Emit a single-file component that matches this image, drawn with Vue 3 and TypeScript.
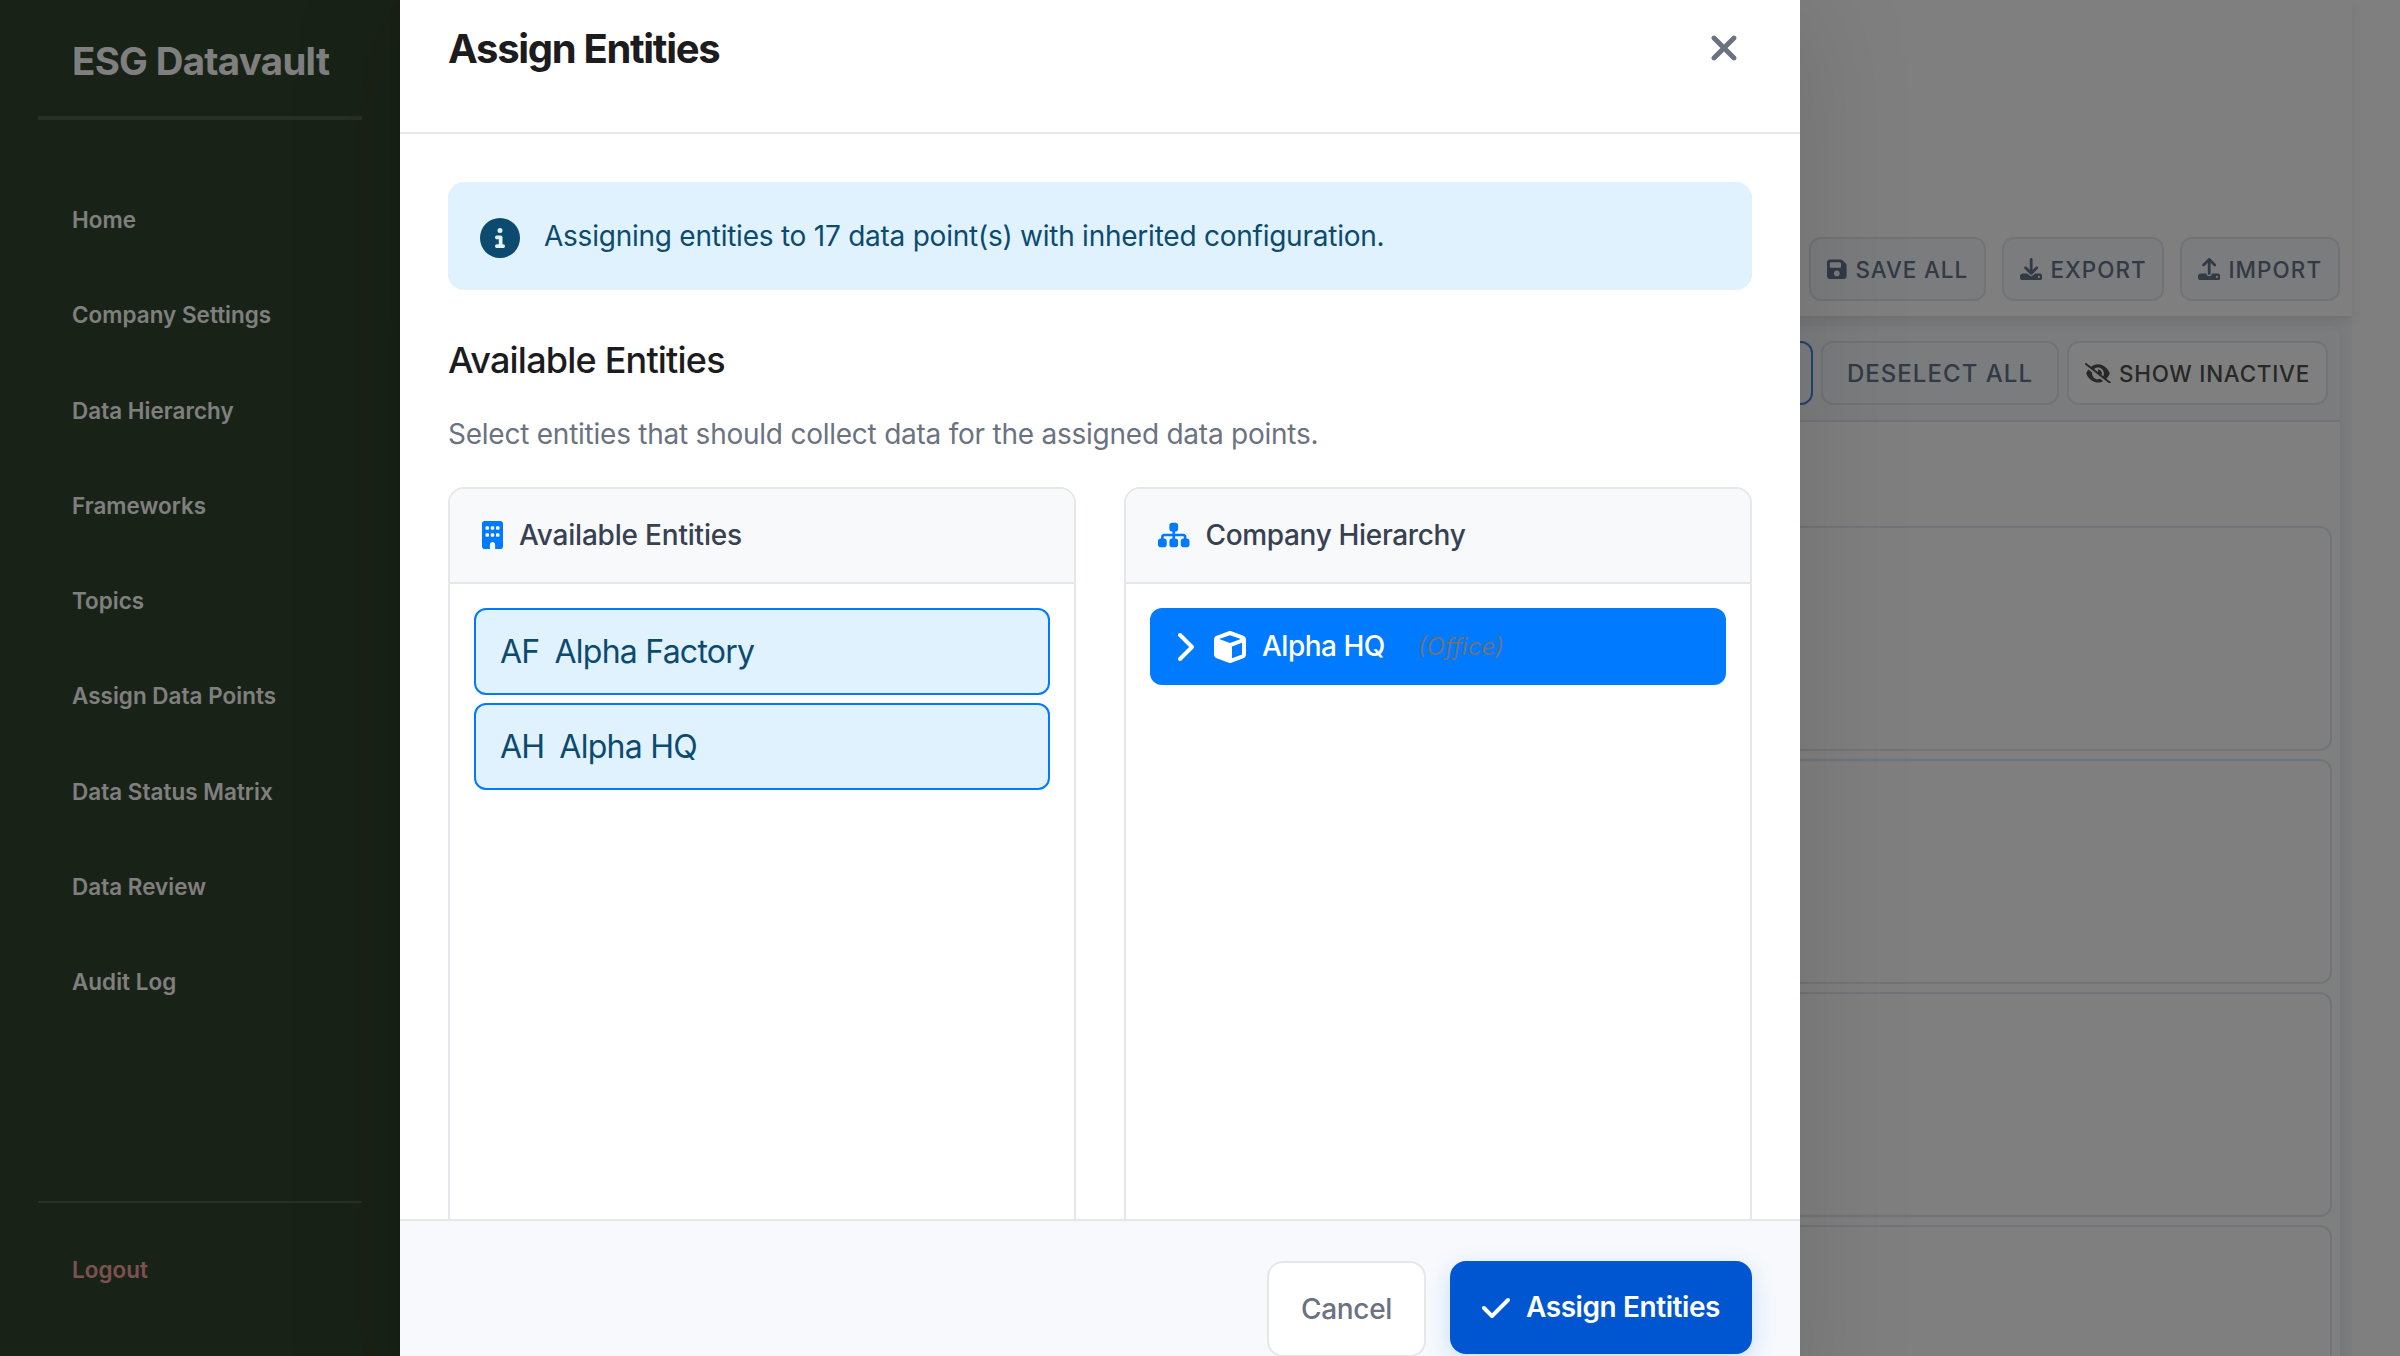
<script setup lang="ts">
interface Glyph { w: number; d: string }

const icons: Record<string, Glyph> = {
  info: { w: 512, d: 'M256 512A256 256 0 1 0 256 0a256 256 0 1 0 0 512zM216 336h24V272H216c-13.3 0-24-10.7-24-24s10.7-24 24-24h48c13.3 0 24 10.7 24 24v88h8c13.3 0 24 10.7 24 24s-10.7 24-24 24H216c-13.3 0-24-10.7-24-24s10.7-24 24-24zm40-208a32 32 0 1 1 0 64 32 32 0 1 1 0-64z' },
  building: { w: 384, d: 'M48 0C21.5 0 0 21.5 0 48V464c0 26.5 21.5 48 48 48h96V432c0-26.5 21.5-48 48-48s48 21.5 48 48v80h96c26.5 0 48-21.5 48-48V48c0-26.5-21.5-48-48-48H48zM64 240c0-8.8 7.2-16 16-16h32c8.8 0 16 7.2 16 16v32c0 8.8-7.2 16-16 16H80c-8.8 0-16-7.2-16-16V240zm112-16h32c8.8 0 16 7.2 16 16v32c0 8.8-7.2 16-16 16H176c-8.8 0-16-7.2-16-16V240c0-8.8 7.2-16 16-16zm80 16c0-8.8 7.2-16 16-16h32c8.8 0 16 7.2 16 16v32c0 8.8-7.2 16-16 16H272c-8.8 0-16-7.2-16-16V240zM80 96h32c8.8 0 16 7.2 16 16v32c0 8.8-7.2 16-16 16H80c-8.8 0-16-7.2-16-16V112c0-8.8 7.2-16 16-16zm80 16c0-8.8 7.2-16 16-16h32c8.8 0 16 7.2 16 16v32c0 8.8-7.2 16-16 16H176c-8.8 0-16-7.2-16-16V112zM272 96h32c8.8 0 16 7.2 16 16v32c0 8.8-7.2 16-16 16H272c-8.8 0-16-7.2-16-16V112c0-8.8 7.2-16 16-16z' },
  sitemap: { w: 576, d: 'M208 80c0-26.5 21.5-48 48-48h64c26.5 0 48 21.5 48 48v64c0 26.5-21.5 48-48 48h-8v40H464c30.9 0 56 25.1 56 56v32h8c26.5 0 48 21.5 48 48v64c0 26.5-21.5 48-48 48H464c-26.5 0-48-21.5-48-48V368c0-26.5 21.5-48 48-48h8V288c0-4.4-3.6-8-8-8H312v40h8c26.5 0 48 21.5 48 48v64c0 26.5-21.5 48-48 48H256c-26.5 0-48-21.5-48-48V368c0-26.5 21.5-48 48-48h8V280H112c-4.4 0-8 3.6-8 8v32h8c26.5 0 48 21.5 48 48v64c0 26.5-21.5 48-48 48H48c-26.5 0-48-21.5-48-48V368c0-26.5 21.5-48 48-48h8V288c0-30.9 25.1-56 56-56H264V192h-8c-26.5 0-48-21.5-48-48V80z' },
  xmark: { w: 384, d: 'M342.6 150.6c12.5-12.5 12.5-32.8 0-45.3s-32.8-12.5-45.3 0L192 210.7 86.6 105.4c-12.5-12.5-32.8-12.5-45.3 0s-12.5 32.8 0 45.3L146.7 256 41.4 361.4c-12.5 12.5-12.5 32.8 0 45.3s32.8 12.5 45.3 0L192 301.3 297.4 406.6c12.5 12.5 32.8 12.5 45.3 0s12.5-32.8 0-45.3L237.3 256 342.6 150.6z' },
  check: { w: 448, d: 'M438.6 105.4c12.5 12.5 12.5 32.8 0 45.3l-256 256c-12.5 12.5-32.8 12.5-45.3 0l-128-128c-12.5-12.5-12.5-32.8 0-45.3s32.8-12.5 45.3 0L160 338.7 393.4 105.4c12.5-12.5 32.8-12.5 45.3 0z' },
  chevron: { w: 320, d: 'M310.6 233.4c12.5 12.5 12.5 32.8 0 45.3l-192 192c-12.5 12.5-32.8 12.5-45.3 0s-12.5-32.8 0-45.3L242.7 256 73.4 86.6c-12.5-12.5-12.5-32.8 0-45.3s32.8-12.5 45.3 0l192 192z' },
  cube: { w: 512, d: 'M234.5 5.7c13.9-5 29.1-5 43.1 0l192 68.6C495 83.4 512 107.5 512 134.6V377.4c0 27-17 51.2-42.5 60.3l-192 68.6c-13.9 5-29.1 5-43.1 0l-192-68.6C17 428.6 0 404.5 0 377.4V134.6c0-27 17-51.2 42.5-60.3l192-68.6zM256 66L82.3 128 256 190l173.7-62L256 66zm32 368.6l160-57.1v-188L288 246.6v188z' },
  save: { w: 448, d: 'M64 32C28.7 32 0 60.7 0 96V416c0 35.3 28.7 64 64 64H384c35.3 0 64-28.7 64-64V173.3c0-17-6.7-33.3-18.7-45.3L352 50.7C340 38.7 323.7 32 306.7 32H64zm0 96c0-17.7 14.3-32 32-32H288c17.7 0 32 14.3 32 32v64c0 17.7-14.3 32-32 32H96c-17.7 0-32-14.3-32-32V128zM224 288a64 64 0 1 1 0 128 64 64 0 1 1 0-128z' },
  download: { w: 512, d: 'M288 32c0-17.7-14.3-32-32-32s-32 14.3-32 32V274.7l-73.4-73.4c-12.5-12.5-32.8-12.5-45.3 0s-12.5 32.8 0 45.3l128 128c12.5 12.5 32.8 12.5 45.3 0l128-128c12.5-12.5 12.5-32.8 0-45.3s-32.8-12.5-45.3 0L288 274.7V32zM64 352c-35.3 0-64 28.7-64 64v32c0 35.3 28.7 64 64 64H448c35.3 0 64-28.7 64-64V416c0-35.3-28.7-64-64-64H346.5l-45.3 45.3c-25 25-65.5 25-90.5 0L165.5 352H64zm368 56a24 24 0 1 1 0 48 24 24 0 1 1 0-48z' },
  upload: { w: 512, d: 'M288 109.3V352c0 17.7-14.3 32-32 32s-32-14.3-32-32V109.3l-73.4 73.4c-12.5 12.5-32.8 12.5-45.3 0s-12.5-32.8 0-45.3l128-128c12.5-12.5 32.8-12.5 45.3 0l128 128c12.5 12.5 12.5 32.8 0 45.3s-32.8 12.5-45.3 0L288 109.3zM64 352H192c0 35.3 28.7 64 64 64s64-28.7 64-64H448c35.3 0 64 28.7 64 64v32c0 35.3-28.7 64-64 64H64c-35.3 0-64-28.7-64-64V416c0-35.3 28.7-64 64-64zM432 456a24 24 0 1 0 0-48 24 24 0 1 0 0 48z' },
  eyeSlash: { w: 640, d: 'M38.8 5.1C28.4-3.1 13.3-1.2 5.1 9.2S-1.2 34.7 9.2 42.9l592 464c10.4 8.2 25.5 6.3 33.7-4.1s6.3-25.5-4.1-33.7L525.6 386.7c39.6-40.6 66.4-86.1 79.9-118.4c3.3-7.9 3.3-16.7 0-24.6c-14.9-35.7-46.2-87.7-93-131.1C465.5 68.8 400.8 32 320 32c-68.2 0-125 26.3-169.3 60.8L38.8 5.1zM223.1 149.5C248.6 126.2 282.7 112 320 112c79.5 0 144 64.5 144 144c0 24.9-6.3 48.3-17.4 68.7L408 294.5c8.4-19.3 10.6-41.4 4.8-63.3c-11.1-41.5-47.8-69.4-88.6-71.1c-5.8-.2-9.2 6.1-7.4 11.7c2.1 6.4 3.3 13.2 3.3 20.3c0 10.2-2.4 19.8-6.6 28.3l-90.3-70.8zM373 389.9c-16.4 6.5-34.3 10.1-53 10.1c-79.5 0-144-64.5-144-144c0-6.9 .5-13.6 1.4-20.2L83.1 161.5C60.3 191.2 44 220.8 34.5 243.7c-3.3 7.9-3.3 16.7 0 24.6c14.9 35.7 46.2 87.7 93 131.1C174.5 443.2 239.2 480 320 480c47.8 0 89.9-12.9 126.2-32.5L373 389.9z' },
}

const navItems: string[] = [
  'Home', 'Company Settings', 'Data Hierarchy', 'Frameworks', 'Topics',
  'Assign Data Points', 'Data Status Matrix', 'Data Review', 'Audit Log',
]

const actions = [
  { key: 'save', label: 'SAVE ALL' },
  { key: 'download', label: 'EXPORT' },
  { key: 'upload', label: 'IMPORT' },
]

const entities = [
  { code: 'AF', name: 'Alpha Factory' },
  { code: 'AH', name: 'Alpha HQ' },
]

const rows = [1, 2, 3, 4]
const box = (key: string): string => `0 0 ${icons[key].w} 512`
</script>

<template>
  <div class="app">
    <aside class="sidebar">
      <div class="brand">ESG Datavault</div>
      <nav class="nav">
        <a v-for="item in navItems" :key="item" class="nav-item">{{ item }}</a>
      </nav>
      <div class="logout"><a class="nav-item danger">Logout</a></div>
    </aside>

    <main class="main">
      <header class="topbar">
        <button v-for="a in actions" :key="a.key" class="tool" :class="a.key">
          <svg class="ic" :class="a.key" :viewBox="box(a.key)"><path :d="icons[a.key].d" /></svg>
          <span>{{ a.label }}</span>
        </button>
      </header>
      <div class="content">
        <section class="card">
          <div class="card-bar">
            <button class="tool primary" aria-label="Select all"></button>
            <button class="tool deselect">DESELECT ALL</button>
            <button class="tool inactive">
              <svg class="ic eye" :viewBox="box('eyeSlash')"><path :d="icons.eyeSlash.d" /></svg>
              <span>SHOW INACTIVE</span>
            </button>
          </div>
          <div class="rows">
            <div v-for="r in rows" :key="r" class="row"></div>
          </div>
        </section>
      </div>
    </main>

    <div class="overlay">
      <div class="modal">
        <header class="modal-head">
          <h3 class="modal-title">Assign Entities</h3>
          <svg class="ic close" :viewBox="box('xmark')"><path :d="icons.xmark.d" /></svg>
        </header>
        <div class="modal-body">
          <div class="banner">
            <svg class="ic info" :viewBox="box('info')"><path :d="icons.info.d" /></svg>
            <span class="banner-text">Assigning entities to 17 data point(s) with inherited configuration.</span>
          </div>
          <h4 class="section-title">Available Entities</h4>
          <p class="section-sub">Select entities that should collect data for the assigned data points.</p>
          <div class="panels">
            <div class="panel">
              <div class="panel-head">
                <svg class="ic building" :viewBox="box('building')"><path :d="icons.building.d" /></svg>
                <span class="pt-left">Available Entities</span>
              </div>
              <div class="panel-body">
                <div v-for="e in entities" :key="e.code" class="entity">
                  <span>{{ e.code }}</span><span class="entity-name">{{ e.name }}</span>
                </div>
              </div>
            </div>
            <div class="panel">
              <div class="panel-head">
                <svg class="ic sitemap" :viewBox="box('sitemap')"><path :d="icons.sitemap.d" /></svg>
                <span class="pt-right">Company Hierarchy</span>
              </div>
              <div class="panel-body">
                <div class="node">
                  <svg class="ic chevron" :viewBox="box('chevron')"><path :d="icons.chevron.d" /></svg>
                  <svg class="ic cube" :viewBox="box('cube')"><path :d="icons.cube.d" /></svg>
                  <span class="node-name">Alpha HQ</span>
                  <span class="node-type">(Office)</span>
                </div>
              </div>
            </div>
          </div>
        </div>
        <footer class="modal-foot">
          <button class="btn cancel">Cancel</button>
          <button class="btn assign">
            <svg class="ic check" :viewBox="box('check')"><path :d="icons.check.d" /></svg>
            <span class="assign-label">Assign Entities</span>
          </button>
        </footer>
      </div>
    </div>
  </div>
</template>

<style>
body { margin: 0; overflow: hidden; }
</style>

<style scoped>
.app, .app * { box-sizing: border-box; }
.app {
  position: relative;
  display: flex;
  width: 2400px;
  height: 1356px;
  overflow: hidden;
  background: #fff;
  font-family: Inter, "Liberation Sans", sans-serif;
}
button { font-family: inherit; margin: 0; padding: 0; }
.ic { display: block; flex: none; fill: currentColor; }

.sidebar {
  display: flex;
  flex-direction: column;
  flex: none;
  width: 400px;
  height: 1356px;
  padding: 0 38px;
  background: #32442e;
  color: #fff;
}
.brand {
  height: 120px;
  padding: 38px 0 0 34px;
  border-bottom: 4px solid rgba(255, 255, 255, 0.15);
  font-size: 38.4px;
  font-weight: 700;
  line-height: 46px;
  letter-spacing: -0.68px;
  white-space: nowrap;
}
.nav { display: flex; flex-direction: column; padding-top: 52px; }
.nav-item {
  display: flex;
  align-items: center;
  height: 95.25px;
  padding-left: 34px;
  font-size: 22.4px;
  font-weight: 600;
  letter-spacing: 0.06px;
  white-space: nowrap;
}
.logout {
  height: 155px;
  margin-top: auto;
  padding-top: 19px;
  border-top: 2px solid rgba(255, 255, 255, 0.15);
}
.danger { color: #f5a5a5; }

.main { display: flex; flex-direction: column; flex: 1; padding-right: 48px; }
.topbar {
  display: flex;
  flex: none;
  justify-content: flex-end;
  align-items: flex-end;
  gap: 16px;
  height: 318px;
  padding: 0 12px 15px 0;
  border-bottom: 2px solid #e2e6ee;
  box-shadow: 0 4px 12px rgba(0, 0, 0, 0.08);
  position: relative;
}
.tool {
  display: flex;
  align-items: center;
  height: 64px;
  border: 2px solid #e2e6ee;
  border-radius: 12px;
  background: #f7f9fc;
  color: #64748b;
  font-size: 22.4px;
  font-weight: 500;
  letter-spacing: 1.1px;
  white-space: nowrap;
  flex: none;
}
.tool.save { width: 177px; padding-left: 16px; gap: 9px; letter-spacing: 0.9px; }
.tool.download { width: 162px; padding-left: 16px; gap: 8px; }
.tool.upload { width: 160px; padding-left: 16px; gap: 8px; }
.ic.save { width: 19.6px; height: 22.4px; }
.ic.download, .ic.upload { width: 22.4px; height: 22.4px; }
.content { flex: 1; padding: 8px 12px 0 0; background: #f7f9fc; }
.card {
  height: 1100px;
  border-radius: 12px 12px 0 0;
  background: #fff;
  box-shadow: 0 4px 16px rgba(0, 0, 0, 0.08);
}
.card-bar {
  display: flex;
  justify-content: flex-end;
  gap: 8px;
  height: 96px;
  padding: 15px 12px 0 0;
  border-bottom: 2px solid #e2e6ee;
  border-radius: 12px 12px 0 0;
  background: #f7f9fc;
}
.tool.primary { width: 160px; border-color: #4a86dc; }
.tool.deselect { width: 238px; justify-content: center; font-size: 24px; letter-spacing: 1.05px; }
.tool.inactive { width: 261px; padding-left: 16px; gap: 8px; background: #fff; color: #505050; letter-spacing: 0.75px; }
.ic.eye { width: 26px; height: 20.8px; }
.rows { display: flex; flex-direction: column; gap: 8px; padding: 104px 8px 0 0; }
.row { flex: none; height: 225px; border: 2px solid #e2e8f0; border-radius: 12px; }

.overlay {
  position: absolute;
  inset: 0;
  display: flex;
  align-items: center;
  padding-left: 400px;
  background: rgba(0, 0, 0, 0.5);
  overflow: hidden;
}
.modal {
  display: flex;
  flex-direction: column;
  flex: none;
  width: 1400px;
  height: 1434px;
  border-radius: 24px;
  background: #fff;
  box-shadow: 0 40px 120px rgba(0, 0, 0, 0.13);
}
.modal-head {
  display: flex;
  flex: none;
  justify-content: space-between;
  align-items: center;
  height: 173px;
  padding: 0 61px 0 48px;
  border-bottom: 2px solid #e5e7eb;
}
.modal-title {
  margin: 4px 0 0;
  color: #1c1c1e;
  font-size: 40px;
  font-weight: 650;
  letter-spacing: -1.32px;
}
.ic.close { width: 30px; height: 40px; margin-top: 2px; fill: #6b7280; }
.modal-body {
  display: flex;
  flex-direction: column;
  flex: none;
  height: 1085px;
  padding: 48px 48px 0;
  overflow: hidden;
}
.banner {
  display: flex;
  align-items: center;
  flex: none;
  height: 108px;
  padding: 0 32px;
  gap: 24px;
  border-radius: 16px;
  background: #e0f2fe;
  color: #0c4a6e;
}
.ic.info { width: 40px; height: 40px; margin-top: 4px; }
.banner-text { margin-top: -1px; font-size: 28px; line-height: 40px; letter-spacing: -0.24px; white-space: nowrap; }
.section-title {
  margin: 46px 0 0;
  color: #1c1c1e;
  font-size: 36px;
  font-weight: 550;
  line-height: 48px;
  letter-spacing: -0.8px;
}
.section-sub {
  margin: 29px 0 0;
  color: #6b7280;
  font-size: 28px;
  line-height: 42px;
  letter-spacing: -0.24px;
  white-space: nowrap;
}
.panels { display: flex; flex: none; gap: 48px; margin-top: 32px; }
.panel {
  flex: 1;
  height: 800px;
  border: 2px solid #e5e7eb;
  border-radius: 16px;
  overflow: hidden;
}
.panel-head {
  display: flex;
  align-items: center;
  height: 95px;
  padding: 0 0 1px 32px;
  border-bottom: 2px solid #e5e7eb;
  background: #f8f9fb;
  color: #374151;
  font-size: 28px;
  font-weight: 500;
  white-space: nowrap;
}
.panel-head .ic { fill: #007aff; margin-right: 16px; }
.pt-left { letter-spacing: -0.2px; }
.pt-right { letter-spacing: -0.34px; }
.ic.building { width: 21px; height: 28px; }
.ic.sitemap { width: 31.5px; height: 28px; }
.panel-body { display: flex; flex-direction: column; gap: 8px; padding: 24px; }
.entity {
  display: flex;
  align-items: center;
  gap: 15px;
  height: 87px;
  padding-left: 24px;
  border: 2px solid #007aff;
  border-radius: 12px;
  background: #e0f2fe;
  color: #0c4a6e;
  font-size: 32px;
  letter-spacing: -0.75px;
  white-space: nowrap;
}
.node {
  display: flex;
  align-items: center;
  height: 77px;
  padding-left: 24px;
  border-radius: 12px;
  background: #007aff;
  color: #fff;
  font-size: 28px;
  white-space: nowrap;
}
.ic.chevron { width: 20px; height: 32px; }
.ic.cube { width: 32px; height: 32px; margin-left: 20px; }
.node-name { margin: -1px 0 0 16px; font-weight: 500; letter-spacing: -0.5px; }
.node-type { margin-left: 33px; color: #6b7280; font-size: 24px; font-style: italic; }
.modal-foot {
  display: flex;
  flex: 1;
  justify-content: flex-end;
  align-items: flex-start;
  gap: 24px;
  padding: 40px 48px 0;
  border-top: 2px solid #e5e7eb;
  border-radius: 0 0 24px 24px;
  background: #f7f9fc;
}
.btn {
  display: flex;
  align-items: center;
  justify-content: center;
  border-radius: 16px;
  font-size: 28px;
  white-space: nowrap;
}
.cancel {
  width: 159px;
  height: 96px;
  border: 2px solid #e5e7eb;
  background: #fff;
  color: #6b7280;
  font-weight: 500;
  letter-spacing: -0.3px;
}
.assign {
  width: 302px;
  height: 93px;
  gap: 16px;
  border: 0;
  background: #0056d0;
  color: #fff;
  font-weight: 600;
  letter-spacing: -0.42px;
  box-shadow: 0 8px 24px rgba(0, 122, 255, 0.2);
}
.assign-label { margin-top: -1px; }
.ic.check { width: 28px; height: 32px; }
</style>
